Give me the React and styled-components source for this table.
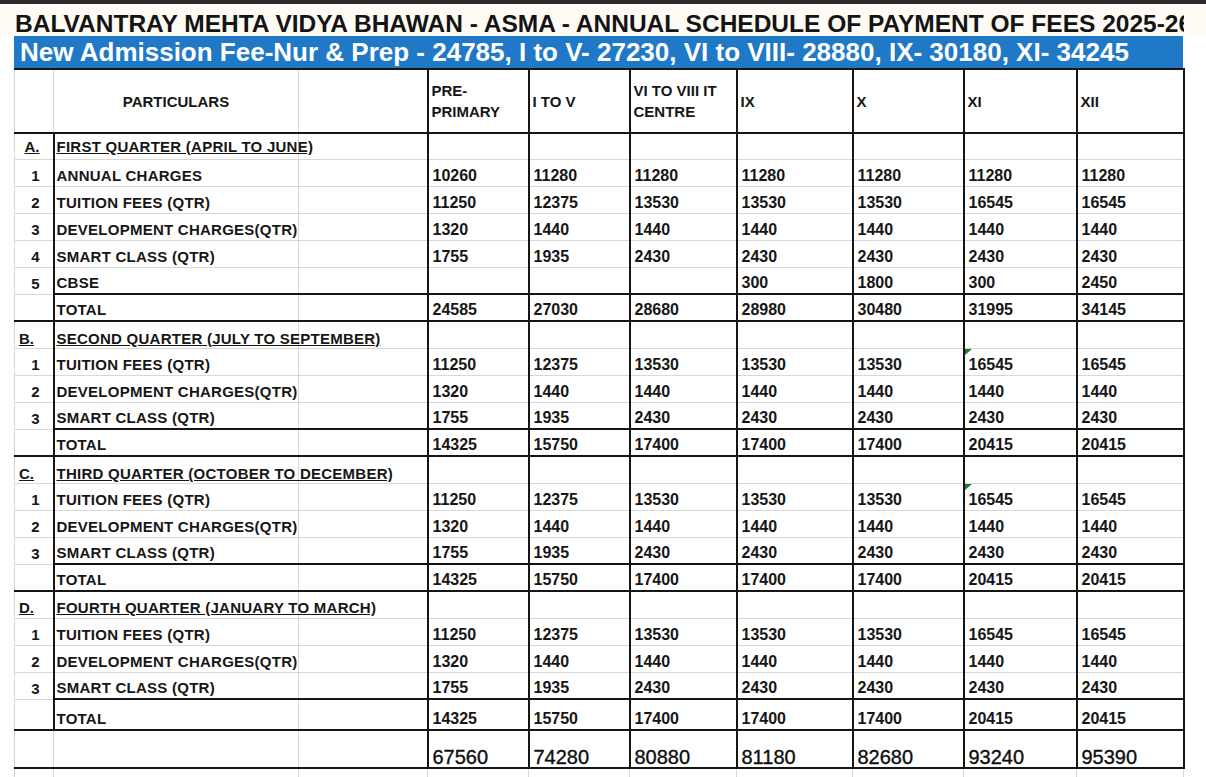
import React from 'react';
import styled, { createGlobalStyle, css } from 'styled-components';

const BLACK = '2px solid #151515';
const GRAY = '1px solid #d8d8d8';

const GlobalStyle = createGlobalStyle`
  html, body { margin: 0; padding: 0; background: #ffffff; }
  body { font-family: "Liberation Sans", Arial, sans-serif; color: #161616; }
  * { box-sizing: border-box; }
`;

const Page = styled.div`
  width: 1206px;
  height: 777px;
  overflow: hidden;
  background: #ffffff;
  display: flex;
  flex-direction: column;
`;

const TopStrip = styled.div`
  flex: none;
  height: 4px;
  background: #2a2a2a;
`;

const TitleBar = styled.div`
  flex: none;
  height: 32px;
  background: #fdfbf4;
  padding-left: 15px;
`;

const TitleText = styled.h1`
  margin: 0;
  width: 1169px;
  height: 32px;
  padding-top: 8px;
  overflow: hidden;
  white-space: nowrap;
  font-size: 24.5px;
  line-height: 24px;
  font-weight: 700;
  color: #141414;
`;

const Banner = styled.div`
  flex: none;
  margin-left: 14px;
  width: 1169px;
  height: 32px;
  padding-left: 6px;
  background: #1f79c6;
  color: #ffffff;
  font-size: 26px;
  line-height: 32px;
  font-weight: 700;
  white-space: nowrap;
  overflow: hidden;
`;

const Sheet = styled.table`
  flex: none;
  margin-left: 14px;
  width: 1169px;
  border-collapse: collapse;
  table-layout: fixed;
  font-size: 15px;
  font-weight: 700;
  color: #161616;
`;

const Row = styled.tr`
  height: ${(p) => p.$h}px;
`;

const baseCell = css`
  padding: 0;
  border-top: none;
  border-left: none;
  border-bottom: ${(p) => (p.$bottom === 'black' ? BLACK : p.$bottom === 'none' ? 'none' : GRAY)};
  border-right: ${(p) => (p.$right === 'black' ? BLACK : GRAY)};
  vertical-align: bottom;
  white-space: nowrap;
  overflow: visible;
  line-height: 17px;
`;

const HeadCell = styled.th`
  ${baseCell};
  border-top: ${BLACK};
  border-left: ${(p) => (p.$first ? GRAY : 'none')};
  vertical-align: middle;
  text-align: ${(p) => (p.$center ? 'center' : 'left')};
  padding-left: ${(p) => (p.$center ? 0 : 3)}px;
  font-size: 15px;
  font-weight: 700;
  line-height: 21px;
`;

const SerialCell = styled.td`
  ${baseCell};
  border-left: ${GRAY};
  text-align: ${(p) => p.$align || 'right'};
  padding-right: ${(p) => (p.$align === 'left' ? 0 : 13)}px;
  padding-left: ${(p) => (p.$align === 'left' ? 4 : 0)}px;
  padding-bottom: ${(p) => (p.$pb != null ? p.$pb : 2)}px;
  text-decoration: ${(p) => (p.$section ? 'underline' : 'none')};
`;

const LabelCell = styled.td`
  ${baseCell};
  padding-left: 2px;
  letter-spacing: 0.25px;
  padding-bottom: ${(p) => (p.$pb != null ? p.$pb : 2)}px;
  text-decoration: ${(p) => (p.$section ? 'underline' : 'none')};
`;

const FillerCell = styled.td`
  ${baseCell};
`;

const ValueCell = styled.td`
  ${baseCell};
  position: relative;
  padding-left: 4px;
  padding-bottom: ${(p) => (p.$big ? 0 : 2)}px;
  font-size: ${(p) => (p.$big ? 20 : 16)}px;
  font-weight: ${(p) => (p.$big ? 400 : 700)};
  line-height: ${(p) => (p.$big ? 20 : 17)}px;
  color: ${(p) => (p.$big ? '#0e0e0e' : '#161616')};
  ${(p) =>
    p.$big &&
    css`
      -webkit-text-stroke: 0.35px #0e0e0e;
    `}
  ${(p) =>
    p.$mark &&
    css`
      &::before {
        content: '';
        position: absolute;
        top: 0;
        left: 0;
        width: 0;
        height: 0;
        border-top: 6px solid #1d7a2e;
        border-right: 7px solid transparent;
      }
    `}
`;

const COL_WIDTHS = [39, 245, 129, 101, 101, 107, 116, 111, 113, 107];

const HEADERS = [
  ['PRE-', 'PRIMARY'],
  ['I TO V'],
  ['VI TO VIII IT', 'CENTRE'],
  ['IX'],
  ['X'],
  ['XI'],
  ['XII'],
];

const QTR_ITEMS = [
  ['1', 'TUITION FEES (QTR)', ['11250', '12375', '13530', '13530', '13530', '16545', '16545']],
  ['2', 'DEVELOPMENT CHARGES(QTR)', ['1320', '1440', '1440', '1440', '1440', '1440', '1440']],
  ['3', 'SMART CLASS (QTR)', ['1755', '1935', '2430', '2430', '2430', '2430', '2430']],
];
const QTR_TOTAL = ['14325', '15750', '17400', '17400', '17400', '20415', '20415'];

const SECTIONS = [
  {
    letter: 'A.',
    align: 'right',
    title: 'FIRST QUARTER (APRIL TO JUNE)',
    h: 26,
    pb: 4,
    items: [
      ['1', 'ANNUAL CHARGES', ['10260', '11280', '11280', '11280', '11280', '11280', '11280']],
      ['2', 'TUITION FEES (QTR)', ['11250', '12375', '13530', '13530', '13530', '16545', '16545']],
      ['3', 'DEVELOPMENT CHARGES(QTR)', ['1320', '1440', '1440', '1440', '1440', '1440', '1440']],
      ['4', 'SMART CLASS (QTR)', ['1755', '1935', '2430', '2430', '2430', '2430', '2430']],
      ['5', 'CBSE', ['', '', '', '300', '1800', '300', '2450']],
    ],
    total: ['24585', '27030', '28680', '28980', '30480', '31995', '34145'],
    totalH: 27,
  },
  {
    letter: 'B.',
    align: 'left',
    title: 'SECOND QUARTER (JULY TO SEPTEMBER)',
    h: 27,
    pb: 1,
    items: QTR_ITEMS,
    total: QTR_TOTAL,
    totalH: 27,
    markFirst: true,
  },
  {
    letter: 'C.',
    align: 'left',
    title: 'THIRD QUARTER (OCTOBER TO DECEMBER)',
    h: 27,
    pb: 1,
    items: QTR_ITEMS,
    total: QTR_TOTAL,
    totalH: 27,
    markFirst: true,
  },
  {
    letter: 'D.',
    align: 'left',
    title: 'FOURTH QUARTER (JANUARY TO MARCH)',
    h: 27,
    pb: 2,
    items: QTR_ITEMS,
    total: QTR_TOTAL,
    totalH: 31,
  },
];

const GRAND = ['67560', '74280', '80880', '81180', '82680', '93240', '95390'];

function Section({ s }) {
  return (
    <>
      <Row $h={s.h}>
        <SerialCell $right="black" $align={s.align} $section $pb={s.pb}>
          {s.letter}
        </SerialCell>
        <LabelCell $section $pb={s.pb}>
          {s.title}
        </LabelCell>
        <FillerCell $right="black" />
        {HEADERS.map((_, i) => (
          <ValueCell key={i} $right="black" />
        ))}
      </Row>
      {s.items.map(([n, label, vals], idx) => {
        const last = idx === s.items.length - 1;
        const b = last ? 'black' : 'gray';
        return (
          <Row key={n} $h={27}>
            <SerialCell $right="black">{n}</SerialCell>
            <LabelCell $bottom={b}>{label}</LabelCell>
            <FillerCell $right="black" $bottom={b} />
            {vals.map((v, i) => (
              <ValueCell
                key={i}
                $right="black"
                $bottom={b}
                $mark={s.markFirst && idx === 0 && i === 5}
              >
                {v}
              </ValueCell>
            ))}
          </Row>
        );
      })}
      <Row $h={s.totalH}>
        <SerialCell $right="black" $bottom="black" />
        <LabelCell $bottom="black">TOTAL</LabelCell>
        <FillerCell $right="black" $bottom="black" />
        {s.total.map((v, i) => (
          <ValueCell key={i} $right="black" $bottom="black">
            {v}
          </ValueCell>
        ))}
      </Row>
    </>
  );
}

export default function App() {
  return (
    <Page>
      <GlobalStyle />
      <TopStrip />
      <TitleBar>
        <TitleText>
          BALVANTRAY MEHTA VIDYA BHAWAN - ASMA - ANNUAL SCHEDULE OF PAYMENT OF FEES 2025-26
        </TitleText>
      </TitleBar>
      <Banner>
        New Admission Fee-Nur &amp; Prep - 24785, I to V- 27230, VI to VIII- 28880, IX- 30180, XI- 34245
      </Banner>
      <Sheet>
        <colgroup>
          {COL_WIDTHS.map((w, i) => (
            <col key={i} style={{ width: w }} />
          ))}
        </colgroup>
        <thead>
          <Row $h={64}>
            <HeadCell $bottom="black" $first />
            <HeadCell $bottom="black" $center>
              PARTICULARS
            </HeadCell>
            <HeadCell $bottom="black" $right="black" />
            {HEADERS.map((lines, i) => (
              <HeadCell key={i} $bottom="black" $right="black">
                {lines.map((l, j) => (
                  <React.Fragment key={j}>
                    {j > 0 && <br />}
                    {l}
                  </React.Fragment>
                ))}
              </HeadCell>
            ))}
          </Row>
        </thead>
        <tbody>
          {SECTIONS.map((s) => (
            <Section key={s.letter} s={s} />
          ))}
          <Row $h={38}>
            <SerialCell $bottom="black" />
            <LabelCell $bottom="black" />
            <FillerCell $right="black" $bottom="black" />
            {GRAND.map((v, i) => (
              <ValueCell key={i} $right="black" $bottom="black" $big>
                {v}
              </ValueCell>
            ))}
          </Row>
          <Row $h={12}>
            <SerialCell $bottom="none" />
            <LabelCell $bottom="none" />
            <FillerCell $bottom="none" />
            {GRAND.map((_, i) => (
              <ValueCell key={i} $bottom="none" />
            ))}
          </Row>
        </tbody>
      </Sheet>
    </Page>
  );
}
